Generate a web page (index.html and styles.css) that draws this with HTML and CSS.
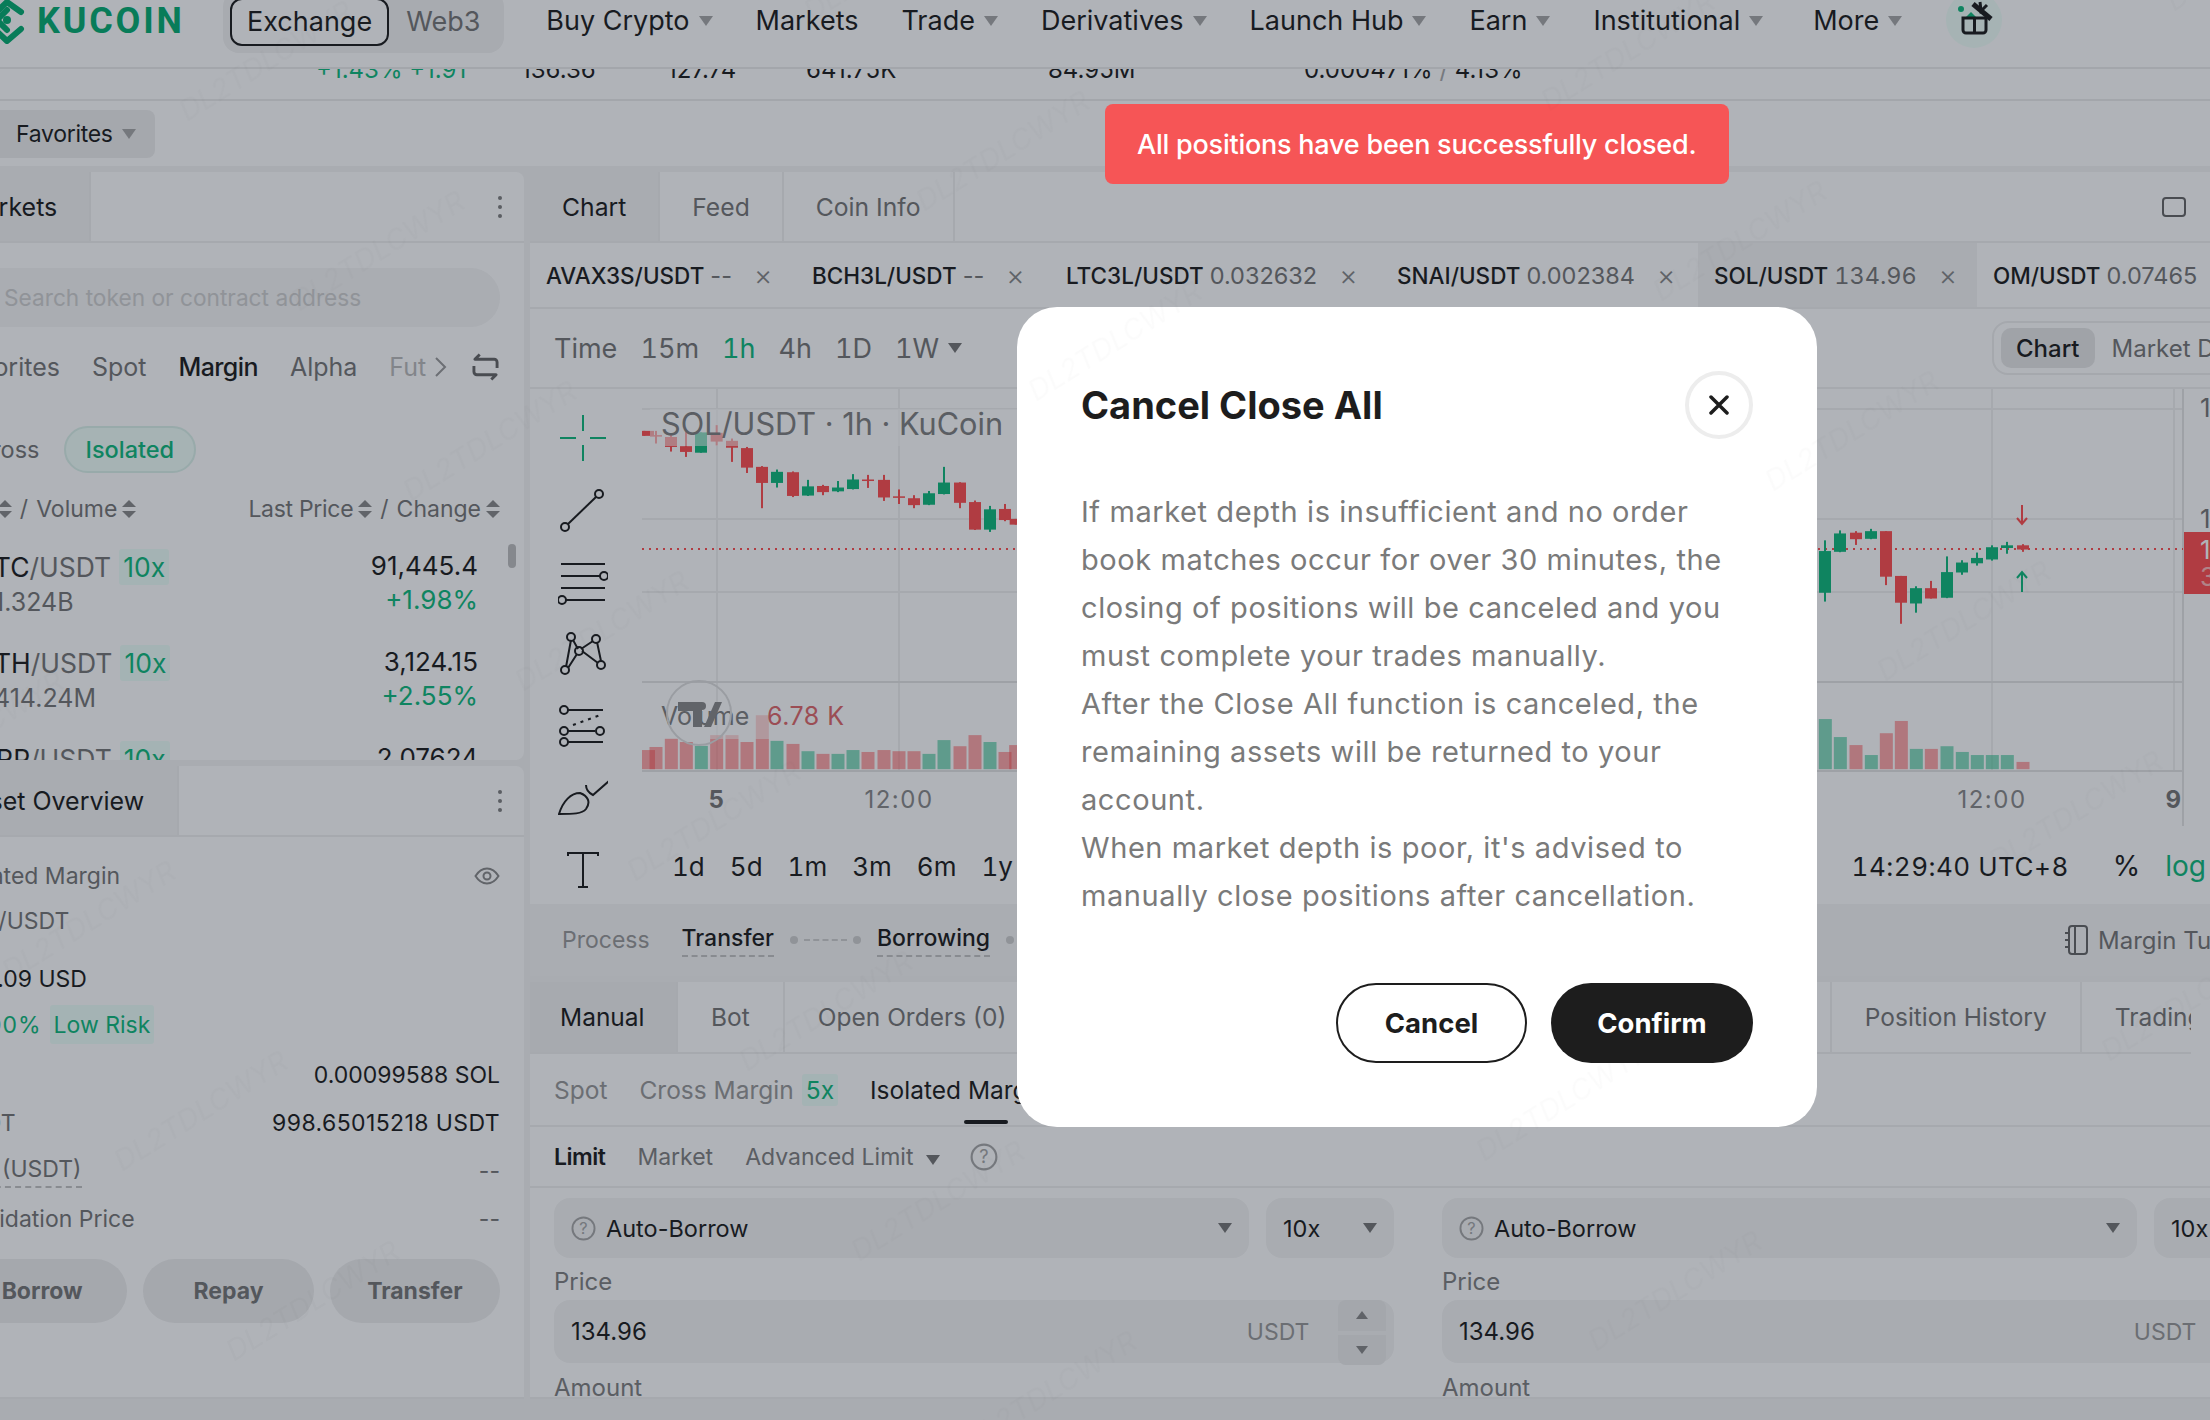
FILE: index.html
```html
<!DOCTYPE html>
<html lang="en">
<head>
    <meta charset="UTF-8">
    <title>SOL/USDT Isolated Margin</title>
    <link rel="stylesheet" href="styles.css">
</head>
<body>
<div class="page">
    <header class="topbar">
        <div class="logo">
            <svg class="logo-mark" width="42" height="44" viewBox="-13 0 42 44"><g fill="none" stroke="#05ad72" stroke-width="6" stroke-linejoin="round" stroke-linecap="round"><polyline points="21,12 7,2 -8,16"/><polyline points="21,29 7,41 -8,27"/><polyline points="7,10 -3,20 7,30"/></g><circle cx="7" cy="20" r="4" fill="#05ad72"/></svg>
            <span class="logo-word">KUCOIN</span>
        </div>
        <div class="switch">
            <span class="switch-on">Exchange</span>
            <span class="switch-off">Web3</span>
        </div>
        <nav class="mainnav">
            <a>Buy Crypto<i class="caret"></i></a>
            <a>Markets</a>
            <a>Trade<i class="caret"></i></a>
            <a>Derivatives<i class="caret"></i></a>
            <a>Launch Hub<i class="caret"></i></a>
            <a>Earn<i class="caret"></i></a>
            <a>Institutional<i class="caret"></i></a>
            <a>More<i class="caret"></i></a>
        </nav>
        <div class="gift">
            <svg width="56" height="56" viewBox="0 0 56 56"><circle cx="15" cy="17" r="3" fill="#0fba7d"/><path d="M20 25l5-5 5 5z" fill="#0fba7d"/><g fill="none" stroke="#1d1d1d" stroke-width="3"><path d="M17 26h23v12a3 3 0 0 1-3 3H20a3 3 0 0 1-3-3z"/><path d="M28.500 26v15"/><path d="M27 12l18 15" stroke-width="5"/><path d="M34 10l1 9 6-6"/></g></svg>
        </div>
    </header>

    <div class="ticker">
        <span class="up">+1.43% +1.91</span>
        <span>136.36</span>
        <span>127.74</span>
        <span>641.75K</span>
        <span>84.95M</span>
        <span>0.000471% <em>/</em> 4.13%</span>
    </div>

    <div class="favbar">
        <span class="favchip">Favorites<i class="caret"></i></span>
    </div>

    <div class="workspace">
        <aside class="sidebar">
            <section class="panel markets">
                <div class="panel-tabs">
                    <span class="panel-tab">Markets</span>
                    <span class="kebab"><b></b><b></b><b></b></span>
                </div>
                <div class="search">Search token or contract address</div>
                <div class="market-types">
                    <span>Favorites</span>
                    <span>Spot</span>
                    <span class="on">Margin</span>
                    <span>Alpha</span>
                    <span class="fade">Futures</span>
                    <svg class="chev" width="14" height="24" viewBox="0 0 14 24"><path d="M2 3l9 9-9 9" fill="none" stroke="#9a9a9a" stroke-width="2"/></svg>
                    <svg class="swap" width="27" height="30" viewBox="0 0 28 30"><path d="M8 2L3 7h20a3 3 0 0 1 3 3v6M20 28l5-5H5a3 3 0 0 1-3-3v-6" fill="none" stroke="#666" stroke-width="3" stroke-linejoin="round"/></svg>
                </div>
                <div class="margin-mode">
                    <span>Cross</span>
                    <span class="pill">Isolated</span>
                </div>
                <div class="list-head">
                    <span>Pair<i class="sort"></i></span><span class="slash">/</span><span>Volume<i class="sort"></i></span>
                    <span class="push">Last Price<i class="sort"></i></span><span class="slash">/</span><span>Change<i class="sort"></i></span>
                </div>
                <div class="pair-row">
                    <div><div class="pair"><b>BTC</b>/USDT<span class="tag">10x</span></div><div class="vol">$1.324B</div></div>
                    <div class="quote"><div>91,445.4</div><div class="up">+1.98%</div></div>
                </div>
                <div class="pair-row">
                    <div><div class="pair"><b>ETH</b>/USDT<span class="tag">10x</span></div><div class="vol">$414.24M</div></div>
                    <div class="quote"><div>3,124.15</div><div class="up">+2.55%</div></div>
                </div>
                <div class="pair-row">
                    <div><div class="pair"><b>XRP</b>/USDT<span class="tag">10x</span></div><div class="vol">$96.3M</div></div>
                    <div class="quote"><div>2.07624</div><div class="up">+1.20%</div></div>
                </div>
                <span class="scrollthumb"></span>
            </section>

            <section class="panel overview">
                <div class="panel-tabs">
                    <span class="panel-tab">Asset Overview</span>
                    <span class="kebab"><b></b><b></b><b></b></span>
                </div>
                <div class="overview-body">
                    <div class="ov-line ov-head"><span>Isolated Margin</span>
                        <svg width="26" height="18" viewBox="0 0 26 18"><path d="M1.500 9C5 3.500 9 1.500 13 1.500S21 3.500 24.500 9C21 14.500 17 16.500 13 16.500S5 14.500 1.500 9z" fill="none" stroke="#8a8a8a" stroke-width="2"/><circle cx="13" cy="9" r="3.500" fill="none" stroke="#8a8a8a" stroke-width="2"/></svg>
                    </div>
                    <div class="ov-line ov-pair">SOL/USDT</div>
                    <div class="ov-line ov-total">999.09 USD</div>
                    <div class="ov-line ov-risk"><span class="up risk-value">0.00%</span><span class="tag tag-risk">Low Risk</span></div>
                    <div class="ov-line ov-kv"><span>SOL</span><b>0.00099588 SOL</b></div>
                    <div class="ov-line ov-kv"><span>USDT</span><b class="wide">998.65015218 USDT</b></div>
                    <div class="ov-line ov-kv"><span class="dashed debt">Debt (USDT)</span><span>--</span></div>
                    <div class="ov-line ov-kv"><span>Liquidation Price</span><span>--</span></div>
                    <div class="ov-buttons">
                        <span>Borrow</span>
                        <span>Repay</span>
                        <span>Transfer</span>
                    </div>
                </div>
            </section>
        </aside>

        <main class="mainarea">
            <section class="panel chartpanel">
                <div class="panel-tabs chart-tabs">
                    <span class="panel-tab">Chart</span>
                    <span class="panel-tab off">Feed</span>
                    <span class="panel-tab off">Coin Info</span>
                    <svg class="expand" width="24" height="20" viewBox="0 0 24 20"><rect x="1" y="1" width="22" height="18" rx="3" fill="none" stroke="#666" stroke-width="2"/></svg>
                </div>
                <div class="symbols">
                    <span class="sym sym-a"><b>AVAX3S/USDT</b> <em>--</em><i>×</i></span>
                    <span class="sym sym-b"><b>BCH3L/USDT</b> <em>--</em><i>×</i></span>
                    <span class="sym sym-c"><b>LTC3L/USDT</b> <em>0.032632</em><i>×</i></span>
                    <span class="sym sym-d"><b>SNAI/USDT</b> <em>0.002384</em><i>×</i></span>
                    <span class="sym sym-e on"><b>SOL/USDT</b> <em>134.96</em><i>×</i></span>
                    <span class="sym"><b>OM/USDT</b> <em>0.07465</em></span>
                </div>
                <div class="chart-tools">
                    <span>Time</span>
                    <span>15m</span>
                    <span class="up">1h</span>
                    <span>4h</span>
                    <span>1D</span>
                    <span class="tool-drop">1W<i class="caret dark"></i></span>
                    <svg class="candle-ico" width="16" height="30" viewBox="0 0 16 30"><path d="M8 0v30" stroke="#666" stroke-width="2"/><rect x="3" y="7" width="10" height="16" rx="2" fill="#fff" stroke="#666" stroke-width="2"/></svg>
                    <div class="view-switch"><span class="on">Chart</span><span>Market Depth</span></div>
                </div>
                <div class="chart-body">
                    <div class="draw-tools">
                        <svg viewBox="-25 -25 50 50"><path d="M0-23V-7M0 7V23M-23 0H-7M7 0H23" stroke="#0fba7d" stroke-width="2"/></svg>
                        <svg viewBox="-25 -25 50 50"><g fill="none" stroke="#1d1d1d" stroke-width="2"><circle cx="-18" cy="17" r="4"/><circle cx="16" cy="-16" r="4"/><path d="M-15 14L13-13"/></g></svg>
                        <svg viewBox="-25 -25 50 50"><g fill="none" stroke="#1d1d1d" stroke-width="2"><path d="M-22-18H22M-22-6H17M-22 6H22M-17 18H22"/><circle cx="21" cy="-6" r="4"/><circle cx="-21" cy="18" r="4"/></g></svg>
                        <svg viewBox="-25 -25 50 50"><g fill="none" stroke="#1d1d1d" stroke-width="2"><path d="M-12-14L-17 13M-10-14L-5-5M-1-3L15 9M10-13L-2-5M14-12L18 7M-15 14L-6 0"/><circle cx="-12" cy="-17" r="4"/><circle cx="13" cy="-15" r="4"/><circle cx="-4" cy="-3" r="4"/><circle cx="-18" cy="16" r="4"/><circle cx="18" cy="11" r="4"/></g></svg>
                        <svg viewBox="-25 -25 50 50"><g fill="none" stroke="#1d1d1d" stroke-width="2"><path d="M-15-16H20M-15 5H12M-15 16H20"/><path d="M-10-1L20-12" stroke-dasharray="3 5"/><circle cx="-19" cy="-16" r="4"/><circle cx="-19" cy="5" r="4"/><circle cx="17" cy="5" r="4"/><circle cx="-19" cy="16" r="4"/></g></svg>
                        <svg viewBox="-25 -25 50 50"><g fill="none" stroke="#1d1d1d" stroke-width="2"><path d="M-24 16C-20 3-12-5-3-5C5-2 8 4 3 11C-1 16-10 16-24 16z"/><path d="M3-13C3-9 6-5 10-3L26-17"/></g></svg>
                        <svg viewBox="-25 -25 50 50"><path d="M-15-14V-17H15V-14M0-17V17M-5 17H5" fill="none" stroke="#1d1d1d" stroke-width="2"/></svg>
                    </div>
                    <div class="chart-right">
                        <svg id="chart" class="chart" width="1568" height="437" viewBox="642 389 1568 437">
                            <g class="grid">
                                <path d="M642 409H2183M642 519H2183M642 592H2183M717 389V771M899 389V771M1992 389V771M2174 389V771"/>
                            </g>
                            <path class="grid-strong" d="M642 682H2183M642 771H2183M2183 389V826"/>
                            <path class="lastline" d="M642 549H2183"/>
                            <g id="series"></g>
                            <rect class="legend-bg" x="650" y="409" width="370" height="37"/>
                            <rect class="legend-bg" x="650" y="702" width="200" height="37"/>
                            <text class="legend" x="661" y="435">SOL/USDT · 1h · KuCoin</text>
                            <text class="legend small" x="661" y="725">Volume</text>
                            <text class="legend small red" x="767" y="725">6.78 K</text>
                            <g class="tvlogo">
                                <circle cx="699" cy="713" r="32"/>
                                <path d="M678 702H702V727H693V711H678z"/>
                                <circle cx="702" cy="706" r="4"/>
                                <path d="M711 727L722 702H715L704 727z"/>
                            </g>
                            <path class="arrow-left" d="M634 754L628 761L634 768"/>
                            <path class="arrow-dn" d="M2022 505V524M2017 518L2022 524L2027 518"/>
                            <path class="arrow-up" d="M2022 592V572M2017 578L2022 572L2027 578"/>
                            <text class="axis" x="2200" y="417">136.00</text>
                            <text class="axis" x="2200" y="528">135.00</text>
                            <rect x="2184" y="532" width="26" height="62" fill="#ff4e4f"/>
                            <text class="axis tagtext" x="2200" y="559">134.96</text>
                            <text class="axis tagtext faint" x="2200" y="586">30:20</text>
                            <text class="xlabel bold" x="717" y="808">5</text>
                            <text class="xlabel" x="899" y="808">12:00</text>
                            <text class="xlabel" x="1992" y="808">12:00</text>
                            <text class="xlabel bold" x="2174" y="808">9</text>
                        </svg>
                        <div class="ranges">
                            <span>1d</span><span>5d</span><span>1m</span><span>3m</span><span>6m</span><span>1y</span>
                            <span class="clock">14:29:40 UTC+8</span>
                            <span class="tail">%</span>
                            <span class="tail up">log</span>
                        </div>
                    </div>
                </div>
            </section>

            <div class="process">
                <span class="process-label">Process</span>
                <span class="dashed strong">Transfer</span>
                <span class="dots"><i></i><u></u><i></i></span>
                <span class="dashed strong">Borrowing</span>
                <span class="dots"><i></i><u></u><i></i></span>
                <span class="tutorial">
                    <svg width="24" height="32" viewBox="0 0 24 32"><g fill="none" stroke="#666" stroke-width="2"><rect x="5" y="2" width="18" height="28" rx="3"/><path d="M11 2V30M1 9H6M1 16H6M1 23H6"/></g></svg>
                    Margin Tutorial
                </span>
            </div>

            <section class="panel orderpanel">
                <div class="order-scroll">
                    <span class="order-tab on">Manual</span>
                    <span class="order-tab">Bot</span>
                    <span class="order-tab tab-wide">Open Orders (0)</span>
                    <span class="order-tab">Position History</span>
                    <span class="order-tab">Trading History</span>
                </div>
                <div class="acct-tabs">
                    <span>Spot</span>
                    <span class="cross">Cross Margin<b class="tag">5x</b></span>
                    <span class="on">Isolated Margin</span>
                </div>
                <div class="order-types">
                    <span class="on">Limit</span>
                    <span>Market</span>
                    <span>Advanced Limit<i class="caret dark"></i></span>
                    <svg class="help help-lg" viewBox="0 0 26 26"><circle cx="13" cy="13" r="11.500"/><text x="13" y="18.500">?</text></svg>
                </div>
                <div class="forms">
                    <div class="form">
                        <div class="selects">
                            <div class="select grow"><svg class="help" viewBox="0 0 26 26"><circle cx="13" cy="13" r="11.500"/><text x="13" y="18.500">?</text></svg>Auto-Borrow<i class="caret dark"></i></div>
                            <div class="select lev">10x<i class="caret dark"></i></div>
                        </div>
                        <div class="label">Price</div>
                        <div class="input">134.96<span class="unit">USDT</span>
                            <span class="stepper"><i class="step-up"></i><i class="step-dn"></i></span>
                        </div>
                        <div class="label label-next">Amount</div>
                    </div>
                    <div class="form">
                        <div class="selects">
                            <div class="select grow"><svg class="help" viewBox="0 0 26 26"><circle cx="13" cy="13" r="11.500"/><text x="13" y="18.500">?</text></svg>Auto-Borrow<i class="caret dark"></i></div>
                            <div class="select lev">10x<i class="caret dark"></i></div>
                        </div>
                        <div class="label">Price</div>
                        <div class="input">134.96<span class="unit unit-end">USDT</span></div>
                        <div class="label label-next">Amount</div>
                    </div>
                </div>
            </section>
        </main>
    </div>
</div>

<div class="mask"></div>

<div class="toast">All positions have been successfully closed.</div>

<div class="modal">
    <div class="modal-head">
        <h2>Cancel Close All</h2>
        <span class="modal-close"><svg width="20" height="20" viewBox="0 0 20 20"><path d="M2 2L18 18M18 2L2 18" stroke="#1d1d1d" stroke-width="3.500" stroke-linecap="round"/></svg></span>
    </div>
    <p class="modal-text">If market depth is insufficient and no order<br>book matches occur for over 30 minutes, the<br>closing of positions will be canceled and you<br>must complete your trades manually.<br>After the Close All function is canceled, the<br>remaining assets will be returned to your<br>account.<br>When market depth is poor, it's advised to<br>manually close positions after cancellation.</p>
    <div class="modal-actions">
        <button class="btn-cancel">Cancel</button>
        <button class="btn-confirm">Confirm</button>
    </div>
</div>

<svg id="watermark" class="watermark" width="2210" height="1420" viewBox="0 0 2210 1420"></svg>

<script src="chart.js"></script>
</body>
</html>
```

FILE: styles.css
```css
* { box-sizing: border-box; }
html, body {
    margin: 0;
    width: 2210px;
    height: 1420px;
    overflow: hidden;
    background: #fff;
}
body {
    font-family: Inter, "Noto Sans", sans-serif;
    font-size: 26px;
    color: #1d1d1d;
}
i, em { font-style: normal; }
.up { color: #0fba7d; }

.page {
    width: 2400px;
    height: 1420px;
    margin-left: -73px;
    background: #f5f5f5;
}

/* top bar */
.topbar {
    display: flex;
    align-items: center;
    height: 69px;
    padding: 0 0 26px 60px;
    background: #fff;
    border-bottom: 2px solid #ececec;
    font-size: 27px;
    position: relative;
    z-index: 1;
}
.logo {
    display: flex;
    align-items: center;
    gap: 8px;
    width: 236px;
    flex: none;
}
.logo-mark { flex: none; margin-top: 3px; }
.logo-word {
    font-family: Roboto, sans-serif;
    font-weight: 700;
    font-size: 36px;
    letter-spacing: 2.800px;
    color: #05ad72;
}
.switch {
    display: flex;
    align-items: center;
    height: 62px;
    padding: 0 24px 0 7px;
    gap: 17px;
    background: #f3f3f3;
    border-radius: 16px;
    margin-top: 2px;
}
.switch-on {
    padding: 0 15px;
    height: 48px;
    line-height: 44px;
    border: 2px solid #1d1d1d;
    border-radius: 12px;
    background: #fff;
}
.switch-off { color: #777; }
.mainnav {
    display: flex;
    gap: 43px;
    margin-left: 42px;
}
.mainnav a { display: flex; align-items: center; white-space: nowrap; }
.mainnav a:last-child { margin-left: 7px; }
.caret {
    display: inline-block;
    width: 0;
    height: 0;
    margin-left: 9px;
    border-left: 7px solid transparent;
    border-right: 7px solid transparent;
    border-top: 10px solid #a8a8a8;
}
.caret.dark { border-top-color: #777; }
.gift {
    width: 56px;
    height: 56px;
    margin-left: 44px;
    margin-top: -2px;
    border-radius: 50%;
    background: #f0fffa;
    flex: none;
}

/* ticker clipped under the top bar */
.ticker {
    display: grid;
    grid-template-columns: 205px 146px 139px 242px 256px auto;
    height: 32px;
    padding-left: 389px;
    overflow: hidden;
    background: #fff;
    border-bottom: 2px solid #ececec;
    font-size: 24px;
    line-height: 30px;
    white-space: nowrap;
}
.ticker span { display: block; margin-top: -14px; }
.ticker em { color: #aaa; }

.favbar {
    height: 65px;
    padding-top: 9px;
    background: #fff;
}
.favchip {
    display: flex;
    align-items: center;
    width: 228px;
    height: 48px;
    padding-left: 89px;
    background: #efefef;
    border-radius: 0 8px 8px 0;
    font-size: 23px;
    letter-spacing: -.3px;
}

.workspace {
    display: flex;
    gap: 6px;
    padding: 6px 0 0 6px;
    height: 1233px;
}
.panel { background: #fff; }
.sidebar {
    display: flex;
    flex-direction: column;
    gap: 6px;
    width: 591px;
    flex: none;
}
.panel-tabs {
    display: flex;
    align-items: center;
    height: 71px;
    border-bottom: 2px solid #f0f0f0;
}
.panel-tab {
    display: flex;
    align-items: center;
    height: 100%;
    padding: 0 33px 0 26px;
    background: #f5f5f5;
    border-right: 2px solid #f0f0f0;
    font-size: 25px;
}
.markets .panel-tab { padding: 0 32px 0 29px; }
.kebab {
    display: flex;
    flex-direction: column;
    gap: 5px;
    margin-left: auto;
    margin-right: 22px;
}
.kebab b {
    width: 4px;
    height: 4px;
    border-radius: 50%;
    background: #808080;
}

/* markets panel */
.markets {
    position: relative;
    height: 588px;
    overflow: hidden;
    border-top-right-radius: 8px;
    border-bottom-right-radius: 8px;
}
.search {
    display: flex;
    align-items: center;
    height: 59px;
    margin: 25px 24px 0 24px;
    padding-left: 47px;
    background: #f6f6f6;
    border-radius: 30px;
    color: #d0d0d0;
    font-size: 22.700px;
}
.market-types {
    display: flex;
    align-items: center;
    gap: 32px;
    height: 36px;
    margin-top: 22px;
    padding-left: 19px;
    color: #777;
    font-size: 25px;
    white-space: nowrap;
}
.market-types .on { color: #1d1d1d; font-weight: 500; letter-spacing: -.6px; }
.market-types .fade {
    width: 38px;
    overflow: hidden;
    color: #bbb;
}
.chev { margin-left: -25px; }
.swap { margin-left: -8px; }
.margin-mode {
    display: flex;
    align-items: center;
    gap: 24px;
    height: 47px;
    margin-top: 41px;
    padding-left: 42px;
    color: #777;
    font-size: 23.500px;
}
.pill {
    display: flex;
    align-items: center;
    height: 47px;
    padding: 0 20px;
    background: #f0fffa;
    border: 2px solid #dbf2ea;
    border-radius: 24px;
    color: #0fba7d;
    font-weight: 500;
}
.list-head {
    display: flex;
    align-items: center;
    height: 30px;
    margin-top: 21px;
    padding: 0 24px 0 18px;
    color: #777;
    font-size: 23px;
    white-space: nowrap;
}
.list-head span { display: flex; align-items: center; }
.list-head .slash { margin: 0 8px; }
.list-head .push { margin-left: auto; letter-spacing: -.3px; }
.sort {
    position: relative;
    width: 14px;
    height: 18px;
    margin-left: 5px;
    flex: none;
}
.sort::before, .sort::after {
    content: "";
    position: absolute;
    left: 0;
    border-left: 7px solid transparent;
    border-right: 7px solid transparent;
}
.sort::before { top: 0; border-bottom: 7px solid #8a8a8a; }
.sort::after { bottom: 0; border-top: 7px solid #8a8a8a; }
.pair-row {
    display: flex;
    justify-content: space-between;
    height: 96px;
    padding: 15px 46px 0 45px;
    line-height: 34px;
    white-space: nowrap;
}
.list-head + .pair-row { margin-top: 10px; }
.pair { display: flex; align-items: center; color: #777; font-size: 26.500px; }
.pair b { font-weight: 400; color: #1d1d1d; }
.tag {
    display: inline-flex;
    align-items: center;
    height: 36px;
    margin-left: 8px;
    padding: 0 4px;
    background: #eefff9;
    border-radius: 3px;
    color: #0fba7d;
    font-weight: 400;
}
.vol { color: #777; font-size: 25px; }
.quote { text-align: right; }
.scrollthumb {
    position: absolute;
    left: 575px;
    top: 372px;
    width: 8px;
    height: 24px;
    background: #bfbfbf;
    border-radius: 4px;
}

/* asset overview */
.overview {
    flex: 1;
    border-top-right-radius: 8px;
    border-bottom: 2px solid #f0f0f0;
}
.overview-body {
    padding: 0 24px 0 20px;
    font-size: 23px;
    white-space: nowrap;
}
.ov-line {
    display: flex;
    align-items: center;
    justify-content: space-between;
    color: #777;
}
.ov-head { height: 34px; margin-top: 22px; }
.ov-pair { height: 34px; margin-top: 11px; }
.ov-total { height: 34px; margin: 24px 0 0 2px; color: #1d1d1d; }
.ov-risk { justify-content: flex-start; height: 39px; margin-top: 9px; padding-left: 12px; }
.risk-value { letter-spacing: 1px; }
.tag-risk { height: 39px; margin-left: 8px; }
.ov-kv { height: 34px; margin-top: 14px; }
.ov-kv b { color: #1d1d1d; font-weight: 400; }
.ov-kv .wide { letter-spacing: .4px; }
.dashed {
    border-bottom: 2px dashed #c4c4c4;
    padding-bottom: 3px;
}
.debt { margin-left: -9px; }
.ov-buttons {
    display: flex;
    gap: 16px;
    margin: 23px 0 0 4px;
}
.ov-buttons span {
    display: flex;
    align-items: center;
    justify-content: center;
    flex: 1;
    height: 64px;
    background: #efefef;
    border-radius: 32px;
    color: #777;
    font-weight: 700;
}

/* chart panel */
.mainarea {
    display: flex;
    flex-direction: column;
    flex: none;
    width: 1750px;
}
.chartpanel { height: 732px; border-top-left-radius: 8px; }
.chart-tabs .panel-tab { padding: 0 32px; font-size: 24.700px; }
.chart-tabs .off { background: #fff; color: #777; }
.expand { margin-left: auto; margin-right: 94px; }
.symbols {
    display: flex;
    height: 66px;
    border-bottom: 2px solid #f0f0f0;
    font-size: 23.500px;
    white-space: nowrap;
}
.sym {
    display: flex;
    align-items: center;
    padding-left: 16px;
}
.sym b { font-weight: 500; font-size: 22.500px; margin-right: 6px; }
.sym em { color: #777; }
.sym-e em { font-feature-settings: "tnum"; }
.sym i {
    color: #888;
    font-size: 28px;
    font-weight: 300;
    margin-left: 22px;
}
.sym-a { width: 266px; }
.sym-b { width: 254px; }
.sym-c { width: 331px; }
.sym-d { width: 317px; }
.sym-e { width: 279px; background: #f5f5f5; }
.chart-tools {
    display: flex;
    align-items: center;
    gap: 23px;
    height: 80px;
    padding-left: 24px;
    border-bottom: 2px solid #f0f0f0;
    color: #777;
    font-size: 27px;
    font-feature-settings: "tnum";
    white-space: nowrap;
}
.tool-drop { display: flex; align-items: center; }
.chart-tools .candle-ico { margin-left: 46px; }
.view-switch {
    display: flex;
    align-items: center;
    gap: 17px;
    flex: none;
    width: 288px;
    height: 54px;
    margin-left: auto;
    padding: 0 7px;
    border: 2px solid #efefef;
    border-radius: 16px 0 0 16px;
    font-size: 24px;
    font-feature-settings: normal;
}
.view-switch .on {
    display: flex;
    align-items: center;
    height: 40px;
    padding: 0 15px;
    background: #e8e8e8;
    border-radius: 10px;
    color: #1d1d1d;
    font-weight: 500;
}
.chart-body {
    display: flex;
    height: 515px;
}
.draw-tools {
    display: flex;
    flex-direction: column;
    align-items: center;
    gap: 22px;
    width: 112px;
    padding: 24px 6px 0 0;
    flex: none;
}
.draw-tools svg { width: 50px; height: 50px; flex: none; }
.chart-right { flex: 1; }
.chart { display: block; }
.grid path { fill: none; stroke: #f1f1f1; stroke-width: 2; }
.grid-strong { fill: none; stroke: #e4e4e4; stroke-width: 2; }
.lastline { fill: none; stroke: #ff4e4f; stroke-width: 2; stroke-dasharray: 2 5; }
.legend-bg { fill: #fff; opacity: .55; }
.legend {
    font-family: Inter, sans-serif;
    font-size: 30.700px;
    fill: #808080;
}
.legend.small { font-size: 25px; }
.legend.red { fill: #e0686a; letter-spacing: .5px; }
.tvlogo circle:first-child { fill: none; stroke: #dedede; stroke-width: 2; }
.tvlogo path, .tvlogo circle { fill: #8a8a8a; }
.arrow-left { fill: none; stroke: #cfcfcf; stroke-width: 2; }
.arrow-dn { fill: none; stroke: #ff4e4f; stroke-width: 2; }
.arrow-up { fill: none; stroke: #0fba7d; stroke-width: 2; }
.axis { font-size: 26px; fill: #777; }
.tagtext { fill: #fff; }
.tagtext.faint { opacity: .6; }
.xlabel {
    font-size: 24px;
    letter-spacing: 1.500px;
    text-anchor: middle;
    fill: #8a8a8a;
}
.xlabel.bold { font-weight: 700; fill: #777; }
.ranges {
    display: flex;
    align-items: center;
    gap: 25px;
    height: 78px;
    padding: 2px 74px 0 30px;
    font-size: 26px;
    font-feature-settings: "tnum";
}
.ranges .clock { margin-left: auto; margin-right: 19px; letter-spacing: .5px; }
.ranges .tail { font-size: 28px; }

/* process strip */
.process {
    display: flex;
    align-items: center;
    flex: none;
    height: 72px;
    padding-left: 32px;
    background: #f7f7f7;
    font-size: 23px;
    white-space: nowrap;
    margin-bottom: 6px;
}
.process-label { color: #999; margin-right: 32px; }
.process .strong { font-weight: 500; }
.dots {
    display: flex;
    align-items: center;
    flex: none;
    width: 71px;
    margin: 0 16px;
}
.dots i {
    width: 8px;
    height: 8px;
    border-radius: 50%;
    background: #cfcfcf;
}
.dots u {
    flex: 1;
    margin: 0 6px;
    border-top: 2px dashed #cfcfcf;
}
.tutorial {
    display: flex;
    align-items: center;
    flex: none;
    gap: 10px;
    width: 216px;
    margin-left: auto;
    color: #777;
    font-size: 24px;
}

/* order panel */
.orderpanel { flex: 1; border-bottom: 2px solid #f0f0f0; overflow: hidden; }
.order-scroll {
    display: flex;
    width: 1661px;
    height: 72px;
    overflow: hidden;
    border-bottom: 2px solid #f0f0f0;
    font-size: 24.500px;
    white-space: nowrap;
}
.order-tab {
    display: flex;
    align-items: center;
    flex: none;
    padding: 0 33px;
    border-right: 2px solid #f0f0f0;
    color: #777;
}
.order-tab.on { width: 148px; background: #f2f2f2; color: #1d1d1d; padding: 0 0 0 30px; }
.tab-wide { width: 1047px; }
.acct-tabs {
    display: flex;
    align-items: center;
    position: relative;
    gap: 32px;
    height: 73px;
    padding-left: 24px;
    border-bottom: 2px solid #f0f0f0;
    color: #999;
    font-size: 24.500px;
    white-space: nowrap;
}
.acct-tabs .on { color: #1d1d1d; }
.acct-tabs .on::after {
    content: "";
    position: absolute;
    left: 434px;
    bottom: 1px;
    width: 44px;
    height: 4px;
    border-radius: 2px;
    background: #1d1d1d;
}
.acct-tabs .cross { display: flex; align-items: center; }
.acct-tabs .tag { height: 32px; margin-left: 8px; }
.order-types {
    display: flex;
    align-items: center;
    gap: 32px;
    height: 61px;
    padding-left: 24px;
    border-bottom: 2px solid #f0f0f0;
    color: #808080;
    font-size: 23px;
}
.order-types .on { color: #1d1d1d; font-weight: 600; letter-spacing: -.5px; }
.order-types .caret { margin-left: 13px; }
.help { width: 25px; height: 25px; flex: none; margin-right: 10px; }
.help-lg { width: 28px; height: 28px; margin: 0 0 0 -2px; }
.help circle { fill: none; stroke: #a8a8a8; stroke-width: 2; }
.help text { font-size: 17px; text-anchor: middle; fill: #a8a8a8; }
.forms {
    display: flex;
    gap: 48px;
    padding: 10px 0 0 24px;
}
.form { width: 840px; flex: none; }
.selects { display: flex; gap: 17px; }
.select {
    display: flex;
    align-items: center;
    height: 60px;
    padding: 0 17px;
    background: #f5f5f5;
    border-radius: 16px;
    font-size: 23.500px;
}
.select.grow { width: 695px; }
.select.lev { width: 128px; }
.select .caret { margin-left: auto; margin-right: 0; }
.label {
    height: 30px;
    margin-top: 9px;
    color: #808080;
    font-size: 24px;
    line-height: 30px;
}
.input {
    display: flex;
    align-items: center;
    position: relative;
    height: 63px;
    margin-top: 3px;
    padding-left: 17px;
    background: #f5f5f5;
    border-radius: 16px;
    font-size: 24px;
}
.unit { margin-left: 600px; color: #999; font-size: 23px; }
.unit-end { margin-left: 599px; }
.stepper {
    position: absolute;
    right: 8px;
    top: 0;
    display: flex;
    flex-direction: column;
    gap: 4px;
    width: 48px;
    height: 65px;
}
.stepper i {
    position: relative;
    flex: 1;
    background: #ededed;
    border-radius: 8px 8px 0 0;
}
.stepper .step-dn { border-radius: 0 0 8px 8px; }
.stepper i::after {
    content: "";
    position: absolute;
    left: 18px;
    top: 11px;
    border-left: 6px solid transparent;
    border-right: 6px solid transparent;
}
.step-up::after { border-bottom: 8px solid #888; }
.step-dn::after { border-top: 8px solid #888; }
.label-next { margin-top: 10px; }

/* backdrop and dialog */
.mask {
    position: fixed;
    inset: 0;
    z-index: 5;
    background: rgba(15, 24, 39, .33);
}
.toast {
    position: absolute;
    z-index: 6;
    left: 1105px;
    top: 104px;
    width: 624px;
    height: 80px;
    padding-left: 32px;
    background: #f65556;
    border-radius: 8px;
    color: #fff;
    font-size: 27px;
    font-weight: 500;
    letter-spacing: -.23px;
    line-height: 82px;
    white-space: nowrap;
}
.modal {
    position: absolute;
    z-index: 6;
    left: 1017px;
    top: 307px;
    display: flex;
    flex-direction: column;
    width: 800px;
    height: 820px;
    padding: 64px;
    background: #fff;
    border-radius: 40px;
}
.modal-head {
    display: flex;
    align-items: center;
    justify-content: space-between;
    height: 68px;
}
.modal-head h2 {
    margin: 0;
    font-size: 38px;
    font-weight: 700;
}
.modal-close {
    display: flex;
    align-items: center;
    justify-content: center;
    width: 68px;
    height: 68px;
    border: 4px solid #ededed;
    border-radius: 50%;
}
.modal-text {
    margin: 49px 0 0;
    color: #7a7a7a;
    font-size: 29px;
    letter-spacing: .58px;
    line-height: 48px;
    white-space: nowrap;
}
.modal-actions {
    display: flex;
    justify-content: flex-end;
    gap: 24px;
    margin-top: 63px;
}
.modal-actions button {
    height: 80px;
    border-radius: 40px;
    font-family: inherit;
    font-size: 27.500px;
    font-weight: 700;
}
.btn-cancel {
    width: 191px;
    background: #fff;
    border: 2px solid #1d1d1d;
    color: #1d1d1d;
}
.btn-confirm {
    width: 202px;
    background: #1d1d1d;
    border: 0;
    color: #fff;
}
.watermark {
    position: absolute;
    z-index: 7;
    left: 0;
    top: 0;
    pointer-events: none;
}
.watermark text {
    font-family: Inter, sans-serif;
    font-style: italic;
    font-size: 29px;
    fill: rgba(0, 0, 0, .015);
}
```

FILE: chart.js
```js
// candles are [x, bodyTop, bodyBottom, wickTop, wickBottom, isRed]
const SVG_NS = "http://www.w3.org/2000/svg";
const GREEN = "#0fba7d";
const RED = "#ff4e4f";

const leftCandles = [
    [343, 342, 355, 342, 355, 1], [378, 353, 357, 342, 375, 1], [423, 358, 384, 350, 396, 1],
    [468, 382, 397, 345, 410, 1], [513, 346, 399, 346, 399, 0], [560, 347, 370, 327, 380, 1],
    [606, 368, 386, 362, 423, 1], [651, 387, 438, 384, 452, 1], [696, 436, 478, 434, 544, 1],
    [741, 449, 478, 443, 490, 0], [789, 450, 512, 448, 515, 1], [834, 487, 511, 470, 512, 0],
    [879, 486, 502, 483, 510, 1], [924, 490, 500, 473, 502, 0], [969, 469, 494, 455, 495, 0],
    [1014, 469, 473, 457, 491, 1], [1062, 470, 516, 457, 525, 1], [1107, 513, 517, 495, 533, 1],
    [1152, 518, 536, 510, 544, 1], [1197, 505, 535, 499, 536, 0], [1242, 477, 507, 436, 508, 0],
    [1290, 477, 530, 476, 544, 1], [1335, 528, 600, 524, 601, 1], [1380, 547, 600, 538, 606, 0],
    [1425, 546, 575, 533, 578, 1], [1457, 572, 587, 572, 587, 1]
];
const rightCandles = [
    [75, 656, 765, 628, 788, 0], [120, 610, 658, 602, 659, 0], [168, 608, 625, 604, 640, 1],
    [213, 604, 624, 598, 625, 0], [258, 604, 723, 604, 745, 1], [303, 721, 791, 721, 846, 1],
    [348, 753, 793, 748, 817, 0], [393, 753, 780, 734, 780, 1], [441, 711, 778, 670, 779, 0],
    [486, 686, 712, 680, 718, 0], [531, 674, 688, 660, 694, 0], [576, 646, 678, 641, 681, 0],
    [621, 641, 648, 632, 663, 0], [669, 641, 652, 638, 658, 1]
];
// volume bars are [x, top, isRed]
const leftVolume = [
    [345, 1176, 1], [378, 1168, 1], [424, 1146, 1], [469, 1155, 1], [514, 1165, 0], [560, 1137, 1],
    [606, 1137, 1], [651, 1155, 1], [697, 1085, 1], [741, 1152, 0], [789, 1160, 1], [834, 1179, 0],
    [879, 1186, 1], [924, 1186, 0], [969, 1176, 0], [1014, 1181, 1], [1062, 1176, 1], [1107, 1179, 1],
    [1152, 1179, 1], [1197, 1186, 0], [1242, 1150, 0], [1290, 1166, 1], [1335, 1137, 1], [1380, 1155, 0],
    [1425, 1181, 1], [1457, 1163, 1]
];
const rightVolume = [
    [76, 1095, 0], [121, 1142, 0], [168, 1163, 1], [214, 1189, 0], [259, 1132, 1], [304, 1100, 1],
    [349, 1173, 0], [394, 1173, 1], [441, 1166, 0], [487, 1181, 0], [532, 1189, 0], [577, 1189, 0],
    [622, 1189, 0], [669, 1207, 1]
];

const series = document.getElementById("series");

function addRect(x, y, w, h, fill, opacity) {
    const r = document.createElementNS(SVG_NS, "rect");
    r.setAttribute("x", x);
    r.setAttribute("y", y);
    r.setAttribute("width", w);
    r.setAttribute("height", h);
    r.setAttribute("fill", fill);
    if (opacity) r.setAttribute("opacity", opacity);
    series.appendChild(r);
}

function drawSet(candles, bars, originX) {
    const py = v => 300 + v / 2.613;
    const bottom = py(1226);
    bars.forEach(b => {
        const x = Math.max(originX + b[0] / 3 - 6.5, 642);
        addRect(x, py(b[1]), 13, bottom - py(b[1]), b[2] ? RED : GREEN, 0.5);
    });
    candles.forEach(c => {
        const x = originX + c[0] / 3;
        const fill = c[5] ? RED : GREEN;
        addRect(x - 1, py(c[3]), 2, py(c[4]) - py(c[3]), fill);
        addRect(Math.max(x - 6, 642), py(c[1]), 12, py(c[2]) - py(c[1]), fill);
    });
}

drawSet(leftCandles, leftVolume, 530);
drawSet(rightCandles, rightVolume, 1800);

// the faint account stamp repeats on a skewed lattice
const stamp = document.getElementById("watermark");
for (let i = -3; i < 6; i++) {
    for (let j = -2; j < 9; j++) {
        const x = 187 + i * 625 + j * 112;
        const y = 122 - i * 100 + j * 190;
        if (x < -200 || x > 2300 || y < -50 || y > 1600) continue;
        const t = document.createElementNS(SVG_NS, "text");
        t.setAttribute("transform", "translate(" + x + " " + y + ") rotate(-32)");
        t.textContent = "DL2TDLCWYR";
        stamp.appendChild(t);
    }
}
```
